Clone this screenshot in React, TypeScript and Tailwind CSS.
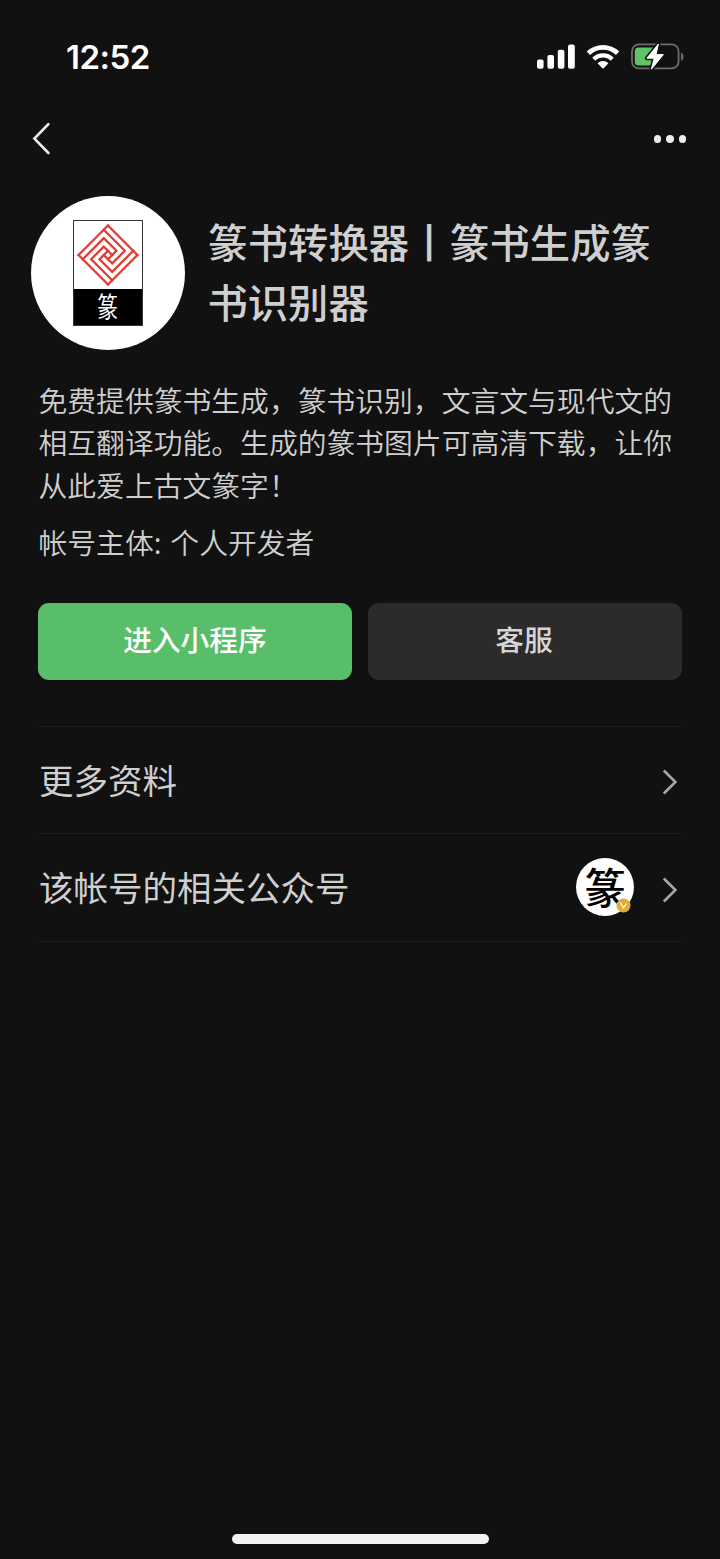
import React from "react";

const SignalIcon = () => (
  <svg width="38" height="26" viewBox="0 0 38 26" fill="#fff">
    <rect x="0" y="15.6" width="6.6" height="9.2" rx="2" />
    <rect x="10.4" y="11" width="6.6" height="13.8" rx="2" />
    <rect x="20.8" y="5.8" width="6.6" height="19" rx="2" />
    <rect x="31" y="0.6" width="6.8" height="24.2" rx="2" />
  </svg>
);

const WifiIcon = () => (
  <svg width="34" height="26" viewBox="0 0 34 26" fill="none">
    <path d="M2.4 9.2a21 21 0 0 1 29.2 0" stroke="#fff" strokeWidth="4.8" />
    <path d="M7.8 15.2a13 13 0 0 1 18.4 0" stroke="#fff" strokeWidth="4.4" />
    <path
      d="M11.6 19.2a7.8 7.8 0 0 1 10.8 0l-4.5 4.9a1.3 1.3 0 0 1-1.8 0z"
      fill="#fff"
    />
  </svg>
);

const BatteryIcon = () => (
  <svg width="54" height="28" viewBox="0 0 54 28" fill="none">
    <rect
      x="1"
      y="1.4"
      width="46.6"
      height="24"
      rx="7"
      stroke="#6c6c6c"
      strokeWidth="1.8"
    />
    <path d="M50 9.4c3.4 1.2 3.4 7.2 0 8.4z" fill="#6c6c6c" />
    <path
      d="M7.6 4.4H22V22.6H7.6a3.8 3.8 0 0 1-3.8-3.8V8.2a3.8 3.8 0 0 1 3.8-3.8z"
      fill="#60c466"
    />
    <path
      d="M27.4 1 15.8 15.2h7.4L20.4 26.2 32.4 11.6h-7.4z"
      fill="#fff"
      stroke="#111"
      strokeWidth="4"
      strokeLinejoin="round"
    />
    <path
      d="M27.4 1 15.8 15.2h7.4L20.4 26.2 32.4 11.6h-7.4z"
      fill="#fff"
      stroke="#fff"
      strokeWidth="1"
      strokeLinejoin="round"
    />
  </svg>
);

const ChevronRight = () => (
  <svg width="16" height="26" viewBox="0 0 16 26" fill="none">
    <path d="M1.8 1.5 13.4 13 1.8 24.5" stroke="#a6a6a6" strokeWidth="2.6" />
  </svg>
);

// border side plus one spiral arm on a 7x7 grid, repeated four times around
const arm = "M-3.5 -3.5H3.5M-3.5 -2.5H1.5V0.5H-0.5";

const SealPattern = () => (
  <svg width="66" height="66" viewBox="-33 -33 66 66" fill="none">
    <g
      transform="rotate(45) scale(5.95)"
      stroke="#e53a33"
      strokeWidth="0.38"
      strokeLinecap="square"
    >
      {[0, 90, 180, 270].map((angle) => (
        <path key={angle} d={arm} transform={`rotate(${angle})`} />
      ))}
    </g>
  </svg>
);

const AppLogo = () => (
  <div className="flex h-[154px] w-[154px] shrink-0 items-center justify-center rounded-full bg-white">
    <div className="flex h-[106px] w-[70px] flex-col border-[1.5px] border-[#333]">
      <div className="flex h-[68px] items-center justify-center">
        <SealPattern />
      </div>
      <div className="flex flex-1 items-center justify-center bg-black text-[21px] leading-none text-white">
        <span className="-mt-0.5 inline-block scale-y-[1.35]">篆</span>
      </div>
    </div>
  </div>
);

const AccountLogo = () => (
  <div className="relative flex h-[58px] w-[58px] items-center justify-center rounded-full bg-white">
    <span className="-mt-0.5 text-[42px] leading-none font-medium text-black">
      篆
    </span>
    <svg
      className="absolute top-10 left-10"
      width="15"
      height="15"
      viewBox="0 0 15 15"
      fill="none"
    >
      <circle cx="7.5" cy="7.5" r="7" fill="#e3ad33" />
      <path d="m4.2 4.5 3.2 5.4 3-4.4" stroke="#fff" strokeWidth="1.3" />
    </svg>
  </div>
);

const Row = ({
  label,
  children,
}: {
  label: string;
  children?: React.ReactNode;
}) => (
  <div className="flex h-[107.5px] items-center justify-between border-b border-[#202020] pr-1">
    <span className="-mt-0.5 pl-px text-[34.5px] leading-none">{label}</span>
    <div className="flex items-center gap-[28px]">
      {children}
      <div className="pt-[5px]">
        <ChevronRight />
      </div>
    </div>
  </div>
);

const App = () => {
  return (
    <div className="flex h-[1559px] w-[720px] flex-col bg-[#111] font-['Noto_Sans_CJK_SC',sans-serif] text-[#cfcfcf]">
      <div className="flex h-[114px] items-center justify-between pr-[35px] pl-[66px]">
        <span className="font-['Inter',sans-serif] text-[33px] leading-none font-semibold tracking-[-0.5px] text-white">
          12:52
        </span>
        <div className="flex items-center">
          <SignalIcon />
          <div className="ml-[11px] flex">
            <WifiIcon />
          </div>
          <div className="ml-[11px] flex">
            <BatteryIcon />
          </div>
        </div>
      </div>

      <div className="flex h-[50px] items-center justify-between pr-[34px] pl-8">
        <svg width="20" height="34" viewBox="0 0 20 34" fill="none">
          <path
            d="M16.4 2.2 2.4 16.6l14 14.4"
            stroke="#ededed"
            strokeWidth="2.6"
            strokeLinecap="round"
          />
        </svg>
        <div className="flex gap-[5px]">
          <div className="h-[7.5px] w-[7.5px] rounded-full bg-[#ededed]" />
          <div className="h-[7.5px] w-[7.5px] rounded-full bg-[#ededed]" />
          <div className="h-[7.5px] w-[7.5px] rounded-full bg-[#ededed]" />
        </div>
      </div>

      <div className="mt-8 flex items-center gap-[23px] pl-[30.5px]">
        <AppLogo />
        <h1 className="w-[460px] pb-[4px] text-[40.3px] leading-[60px] font-medium">
          篆书转换器丨篆书生成篆
          <br />
          书识别器
        </h1>
      </div>

      <div className="px-[38px]">
        <p className="mt-[29px] pl-[0.5px] text-[28.8px] leading-[42.3px] font-[350] whitespace-nowrap">
          免费提供篆书生成，篆书识别，文言文与现代文的
          <br />
          相互翻译功能。生成的篆书图片可高清下载，让你
          <br />
          从此爱上古文篆字！
        </p>
        <p className="mt-[15px] pl-[0.5px] text-[28.8px] leading-[42.3px] font-[350] [word-spacing:2.5px]">
          帐号主体: 个人开发者
        </p>

        <div className="mt-[40px] flex gap-4">
          <button className="h-[77px] w-[314px] rounded-[11px] bg-[#58be6a] pb-1 text-[28.75px] leading-none font-medium text-white">
            进入小程序
          </button>
          <button className="h-[77px] w-[314px] rounded-[11px] bg-[#2b2b2b] pr-0.5 pb-1 text-[28.75px] leading-none font-medium text-[#d5d5d5]">
            客服
          </button>
        </div>

        <div className="mt-[45.5px] border-t border-[#202020]">
          <Row label="更多资料" />
          <Row label="该帐号的相关公众号">
            <AccountLogo />
          </Row>
        </div>
      </div>

      <div className="mx-auto mt-auto mb-[15px] h-[10px] w-[257px] rounded-full bg-[#f2f2f2]" />
    </div>
  );
};

export default App;
